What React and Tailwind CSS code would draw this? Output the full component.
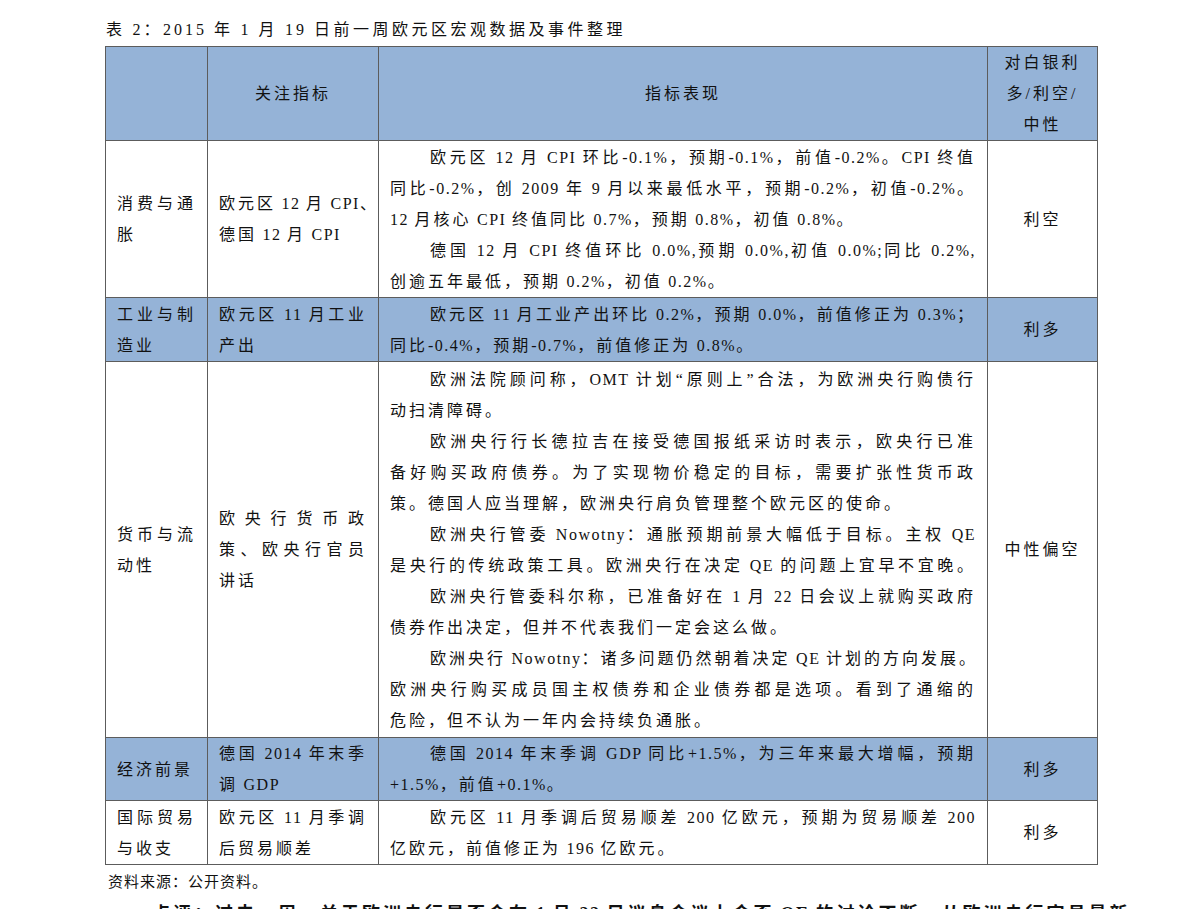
import React from 'react';

const FONT = { fontFamily: '"Liberation Serif", "Noto Sans CJK SC", serif' };

const rows = [
	{
		blue: false,
		h: 'h-[157px]',
		name: ['消费与通', '胀'],
		item: [{ t: '欧元区 12 月 CPI、', j: true }, { t: '德国 12 月 CPI' }],
		body: [
			{ t: '欧元区 12 月 CPI 环比-0.1%，预期-0.1%，前值-0.2%。CPI 终值', i: true, j: true },
			{ t: '同比-0.2%，创 2009 年 9 月以来最低水平，预期-0.2%，初值-0.2%。', j: true },
			{ t: '12 月核心 CPI 终值同比 0.7%，预期 0.8%，初值 0.8%。' },
			{ t: '德国 12 月 CPI 终值环比 0.0%,预期 0.0%,初值 0.0%;同比 0.2%,', i: true, j: true },
			{ t: '创逾五年最低，预期 0.2%，初值 0.2%。' },
		],
		view: '利空',
	},
	{
		blue: true,
		h: 'h-[64px]',
		name: ['工业与制', '造业'],
		item: [{ t: '欧元区 11 月工业', j: true }, { t: '产出' }],
		body: [
			{ t: '欧元区 11 月工业产出环比 0.2%，预期 0.0%，前值修正为 0.3%；', i: true, j: true },
			{ t: '同比-0.4%，预期-0.7%，前值修正为 0.8%。' },
		],
		view: '利多',
	},
	{
		blue: false,
		h: 'h-[376px]',
		name: ['货币与流', '动性'],
		item: [{ t: '欧央行货币政', j: true }, { t: '策、欧央行官员', j: true }, { t: '讲话' }],
		body: [
			{ t: '欧洲法院顾问称，OMT 计划“原则上”合法，为欧洲央行购债行', i: true, j: true },
			{ t: '动扫清障碍。' },
			{ t: '欧洲央行行长德拉吉在接受德国报纸采访时表示，欧央行已准', i: true, j: true },
			{ t: '备好购买政府债券。为了实现物价稳定的目标，需要扩张性货币政', j: true },
			{ t: '策。德国人应当理解，欧洲央行肩负管理整个欧元区的使命。' },
			{ t: '欧洲央行管委 Nowotny：通胀预期前景大幅低于目标。主权 QE', i: true, j: true },
			{ t: '是央行的传统政策工具。欧洲央行在决定 QE 的问题上宜早不宜晚。', j: true },
			{ t: '欧洲央行管委科尔称，已准备好在 1 月 22 日会议上就购买政府', i: true, j: true },
			{ t: '债券作出决定，但并不代表我们一定会这么做。' },
			{ t: '欧洲央行 Nowotny：诸多问题仍然朝着决定 QE 计划的方向发展。', i: true, j: true },
			{ t: '欧洲央行购买成员国主权债券和企业债券都是选项。看到了通缩的', j: true },
			{ t: '危险，但不认为一年内会持续负通胀。' },
		],
		view: '中性偏空',
	},
	{
		blue: true,
		h: 'h-[62px]',
		name: ['经济前景'],
		item: [{ t: '德国 2014 年末季', j: true }, { t: '调 GDP' }],
		body: [
			{ t: '德国 2014 年末季调 GDP 同比+1.5%，为三年来最大增幅，预期', i: true, j: true },
			{ t: '+1.5%，前值+0.1%。' },
		],
		view: '利多',
	},
	{
		blue: false,
		h: 'h-[64px]',
		name: ['国际贸易', '与收支'],
		item: [{ t: '欧元区 11 月季调', j: true }, { t: '后贸易顺差' }],
		body: [
			{ t: '欧元区 11 月季调后贸易顺差 200 亿欧元，预期为贸易顺差 200', i: true, j: true },
			{ t: '亿欧元，前值修正为 196 亿欧元。' },
		],
		view: '利多',
	},
];

// latin runs get less spacing than the CJK around them
const Txt = ({ t, wide }) =>
	t.split(/([\x20-\x7e]+)/).map((p, k) =>
		/^[\x20-\x7e]+$/.test(p) ? (
			<span key={k} className={wide ? 'tracking-[3px]' : 'tracking-[1.5px]'}>
				{p}
			</span>
		) : (
			p
		)
	);

const Line = ({ l }) => (
	<div
		className={
			'whitespace-nowrap ' +
			(l.j ? 'text-justify [text-align-last:justify] ' : 'text-left ') +
			(l.i ? 'pl-[40px]' : '')
		}
	>
		<Txt t={l.t} />
	</div>
);

const cell = 'border-[1.5px] border-[#5c5c5c] align-middle px-[11px] py-0';

const App = () => {
	return (
		<div
			style={FONT}
			className="bg-white w-[1191px] min-h-[909px] text-[#111] text-[16px] leading-[31px] tracking-[3px] pt-[14px] pl-[106px]"
		>
			<div className="leading-[32px] text-[16px] tracking-[3.5px]">
				<Txt wide t="表 2：2015 年 1 月 19 日前一周欧元区宏观数据及事件整理" />
			</div>
			<table className="table-fixed border-collapse w-[992px] -ml-[1px]">
				<colgroup>
					<col className="w-[102px]" />
					<col className="w-[171px]" />
					<col className="w-[609px]" />
					<col className="w-[110px]" />
				</colgroup>
				<tbody>
					<tr className="bg-[#95b3d7] h-[94px]">
						<td className={cell}></td>
						<td className={cell + ' text-center'}>关注指标</td>
						<td className={cell + ' text-center'}>指标表现</td>
						<td className={cell + ' text-center'}>
							<div>对白银利</div>
							<div>多/利空/</div>
							<div>中性</div>
						</td>
					</tr>
					{rows.map((r) => (
						<tr key={r.view + r.name[0]} className={(r.blue ? 'bg-[#95b3d7] ' : 'bg-white ') + r.h}>
							<td className={cell}>
								{r.name.map((n) => (
									<div key={n} className={r.name.length > 1 && n.length === 4 ? 'text-justify [text-align-last:justify]' : ''}>
										{n}
									</div>
								))}
							</td>
							<td className={cell}>
								{r.item.map((l) => (
									<Line key={l.t} l={l} />
								))}
							</td>
							<td className={cell}>
								{r.body.map((l) => (
									<Line key={l.t} l={l} />
								))}
							</td>
							<td className={cell + ' text-center'}>{r.view}</td>
						</tr>
					))}
				</tbody>
			</table>
			<div className="text-[15px] leading-[34px] tracking-[1px] pl-[2px]">资料来源：公开资料。</div>
			<div className="font-bold text-[18px] leading-[30px] tracking-[3px] pl-[46px] w-[992px] text-justify [text-align-last:justify] whitespace-nowrap">
				<Txt t="点评：过去一周，关于欧洲央行是否会在 1 月 22 日议息会议上会否 QE 的讨论不断，从欧洲央行官员最新" />
			</div>
		</div>
	);
};

export default App;
